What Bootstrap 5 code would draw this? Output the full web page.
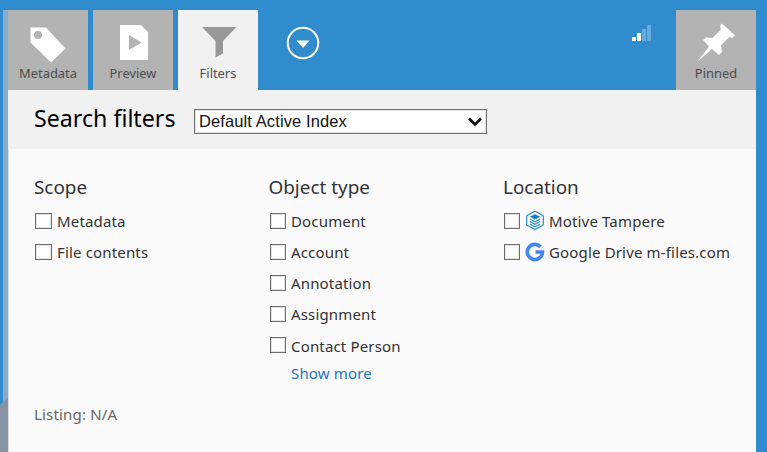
<!DOCTYPE html>
<html lang="en">
<head>
<meta charset="utf-8">
<title>Search filters</title>
<meta name="viewport" content="width=device-width, initial-scale=1">
<link href="https://cdn.jsdelivr.net/npm/bootstrap@5.3.0/dist/css/bootstrap.min.css" rel="stylesheet">
<style>
body{font-family:"Noto Sans","Open Sans",sans-serif;background:#308ccc;height:452px;overflow:hidden;color:#333}
.frame{height:452px;padding:10px 11px 0 3px}
.edge{width:5px;background:#8eaacb}
.edge-corner{left:0;top:397px;width:8px;height:55px;background:#8893a6;clip-path:polygon(0 8px,8px 0,8px 55px,0 55px)}
.tabs{height:80px;gap:5px}
.tab-tile{width:80px;height:80px;background:#b3b3b3;color:#4d4d4d;font-size:12.9px;line-height:18px;border:0;padding:12px 0 0}
.tab-tile svg{width:80px;height:42px;flex:none}
.tab-tile.current{background:#f1f1f1}
.more-btn{width:34px;height:34px;margin:16px 0 0 23px}
.signal{width:20px;height:17px;margin:15px 20px 0 auto}
.title-bar{height:59px;background:#f1f1f1;padding-left:26px}
.title-bar h1{font-size:23.2px;line-height:32px;color:#000;width:160px;margin:12px 0 0;white-space:nowrap}
.index-select{width:293px;height:25px;margin-top:19px;border:1px solid #707070;outline:1px solid #e3e3e3;outline-offset:-2px;background:#fff;color:#111;font:16.5px/23px "Liberation Sans",Arial,sans-serif;letter-spacing:.1px;padding:0 4px}
.panel-body{background:#fafafa;border-left:1px solid #ddd;padding:24px 0 0 25px}
.filters{height:230px}
.filter-col{width:234.5px;flex:none}
.filter-col h2{font-size:18.9px;line-height:28px;margin:0 0 4px;font-weight:400;color:#333}
.filter-row{height:31.2px;font-size:15px;letter-spacing:.16px;white-space:nowrap}
.filter-row span{padding-top:1px}
.box{appearance:none;width:16px;height:16px;margin:0 5.500px 0 1px;border:1px solid #6f6f6f;box-shadow:inset 0 0 0 1px #e3e3e3;background:#fff;flex:none}
.box.wide{width:17px;margin-right:5px}
.src-icon{width:20px;height:20px;margin:0 4.200px 0 -.7px;flex:none}
.show-more{color:#1a76c4;font-size:15px;letter-spacing:.17px;line-height:22px;margin:1px 0 0 22.500px;text-decoration:none;display:block}
.listing{font-size:15px;letter-spacing:.17px;line-height:22px;color:#666}
</style>
</head>
<body>
<div class="frame d-flex position-relative">
  <div class="edge flex-shrink-0"></div>
  <div class="edge-corner position-absolute"></div>
  <main class="flex-grow-1 d-flex flex-column">
    <nav class="tabs d-flex">
      <button class="tab-tile d-flex flex-column align-items-center"><svg viewBox="0 0 80 42"><path fill="#fff" fill-rule="evenodd" d="M22.5 5.5H38L57.5 26.5 43 40.5 22.5 20.5ZM30 9a4 4 0 1 0 0 8 4 4 0 0 0 0-8Z"/></svg><span>Metadata</span></button>
      <button class="tab-tile d-flex flex-column align-items-center"><svg viewBox="0 0 80 42"><path fill="#fff" fill-rule="evenodd" d="M27 3H48L55 10V38H27ZM36 13V28L48.500 20.500Z"/></svg><span>Preview</span></button>
      <button class="tab-tile current d-flex flex-column align-items-center"><svg viewBox="0 0 80 42"><path fill="#999" d="M24 5H58.500L45 19V31.500L37.500 35.500V19Z"/></svg><span>Filters</span></button>
      <svg class="more-btn" viewBox="0 0 34 34"><circle cx="17" cy="17" r="15.300" fill="none" stroke="#fff" stroke-width="2"/><path fill="#fff" d="M10.500 14.500H23.500L17 22Z"/></svg>
      <svg class="signal" viewBox="0 0 20 17"><path fill="#fff" d="M1 12h4v4H1zM6 8h4v8H6z"/><path fill="#69abdc" d="M11 4h4v12h-4zM16 0h4v16h-4z"/></svg>
      <button class="tab-tile d-flex flex-column align-items-center"><svg viewBox="0 0 80 42"><path fill="#fff" d="M46 1.500L59 13.500 56.500 16 53.500 15 45 23.500 46 30 43 33 36 27 21.500 39.500 33 24.500 27 18 30 15.500 36.500 16 45 7.500 44 4Z"/></svg><span>Pinned</span></button>
    </nav>
    <header class="title-bar d-flex align-items-start">
      <h1 class="fw-normal">Search filters</h1>
      <div class="index-select d-flex align-items-center justify-content-between" role="combobox"><span>Default Active Index</span><svg width="14" height="10" viewBox="0 0 14 10"><path d="M1 1.500L7 7.500 13 1.500" fill="none" stroke="#111" stroke-width="2.500"/></svg></div>
    </header>
    <section class="panel-body flex-grow-1">
      <div class="filters d-flex">
        <div class="filter-col">
          <h2>Scope</h2>
          <label class="filter-row d-flex align-items-center"><input type="checkbox" class="box wide"><span>Metadata</span></label>
          <label class="filter-row d-flex align-items-center"><input type="checkbox" class="box wide"><span>File contents</span></label>
        </div>
        <div class="filter-col">
          <h2>Object type</h2>
          <label class="filter-row d-flex align-items-center"><input type="checkbox" class="box"><span>Document</span></label>
          <label class="filter-row d-flex align-items-center"><input type="checkbox" class="box"><span>Account</span></label>
          <label class="filter-row d-flex align-items-center"><input type="checkbox" class="box"><span>Annotation</span></label>
          <label class="filter-row d-flex align-items-center"><input type="checkbox" class="box"><span>Assignment</span></label>
          <label class="filter-row d-flex align-items-center"><input type="checkbox" class="box"><span>Contact Person</span></label>
          <a href="#" class="show-more">Show more</a>
        </div>
        <div class="filter-col">
          <h2>Location</h2>
          <label class="filter-row d-flex align-items-center"><input type="checkbox" class="box"><svg class="src-icon" viewBox="0 0 20 20"><path d="M10 .2L18.300 4.800V14L10 18.600 1.700 14V4.800Z" fill="#fff" stroke="#2288ce" stroke-width="1.200"/><path d="M10 3.200L15.200 5.800 10 8.400 4.800 5.800Z" fill="#137bc6"/><path d="M4.800 8L10 10.700 15.200 8M4.800 10.500L10 13.200 15.200 10.500M4.800 13L10 15.700 15.200 13" fill="none" stroke="#2288ce" stroke-width="1.200"/></svg><span>Motive Tampere</span></label>
          <label class="filter-row d-flex align-items-center"><input type="checkbox" class="box"><svg class="src-icon" viewBox="0 0 20 20"><path d="M15.500 4.800A7.600 7.600 0 1 0 17.500 10H10.500" fill="none" stroke="#4285f4" stroke-width="3.600"/></svg><span>Google Drive m-files.com</span></label>
        </div>
      </div>
      <div class="listing">Listing: N/A</div>
    </section>
  </main>
</div>
<script src="https://cdn.jsdelivr.net/npm/bootstrap@5.3.0/dist/js/bootstrap.bundle.min.js"></script>
</body>
</html>
